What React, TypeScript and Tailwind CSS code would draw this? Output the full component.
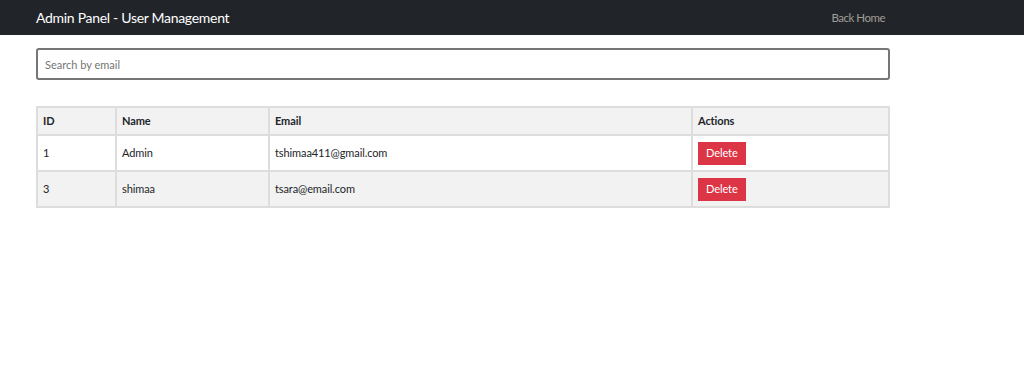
import { useState } from "react";

const users = [
  { id: 1, name: "Admin", email: "tshimaa411@gmail.com" },
  { id: 3, name: "shimaa", email: "tsara@email.com" },
];

const AdminPanel = () => {
  const [query, setQuery] = useState("");

  const filtered = users.filter((u) =>
    u.email.toLowerCase().includes(query.toLowerCase())
  );

  return (
    <div className="min-h-screen bg-white font-['Lato',sans-serif] text-[#212529]">
      <nav className="h-[35px] bg-[#212529] flex items-center justify-between pl-[36px] pr-[139px]">
        <span className="text-white text-[14px] tracking-[-0.3px]">Admin Panel - User Management</span>
        <a href="#" className="text-[11.5px] tracking-[-0.5px] text-[#a09d98]">
          Back Home
        </a>
      </nav>

      <main className="pl-[36px] pt-[13px] w-[890px]">
        <input
          type="text"
          value={query}
          onChange={(e) => setQuery(e.target.value)}
          placeholder="Search by email"
          className="w-full h-[32px] border-2 border-[#767676] rounded-[3px] px-[7px] text-[11px] placeholder:text-[#757575] outline-none"
        />

        <table className="w-full mt-[26px] border-collapse border border-[#dddddd] text-[11px] tracking-[-0.1px]">
          <thead>
            <tr className="bg-[#f2f2f2] h-[28px]">
              <th className="w-[79px] border-2 border-[#dddddd] px-[5px] text-left font-bold">ID</th>
              <th className="w-[153px] border-2 border-[#dddddd] px-[5px] text-left font-bold">Name</th>
              <th className="w-[423px] border-2 border-[#dddddd] px-[5px] text-left font-bold">Email</th>
              <th className="border-2 border-[#dddddd] px-[5px] text-left font-bold">Actions</th>
            </tr>
          </thead>
          <tbody>
            {filtered.map((u, i) => (
              <tr key={u.id} className={`h-[36px] ${i % 2 === 1 ? "bg-[#f2f2f2]" : "bg-white"}`}>
                <td className="border-2 border-[#dddddd] px-[5px]">{u.id}</td>
                <td className="border-2 border-[#dddddd] px-[5px]">{u.name}</td>
                <td className="border-2 border-[#dddddd] px-[5px]">{u.email}</td>
                <td className="border-2 border-[#dddddd] px-[5px]">
                  <button className="bg-[#dc3545] text-white text-[11px] h-[23px] px-[8px]">
                    Delete
                  </button>
                </td>
              </tr>
            ))}
          </tbody>
        </table>
      </main>
    </div>
  );
};

export default AdminPanel;
